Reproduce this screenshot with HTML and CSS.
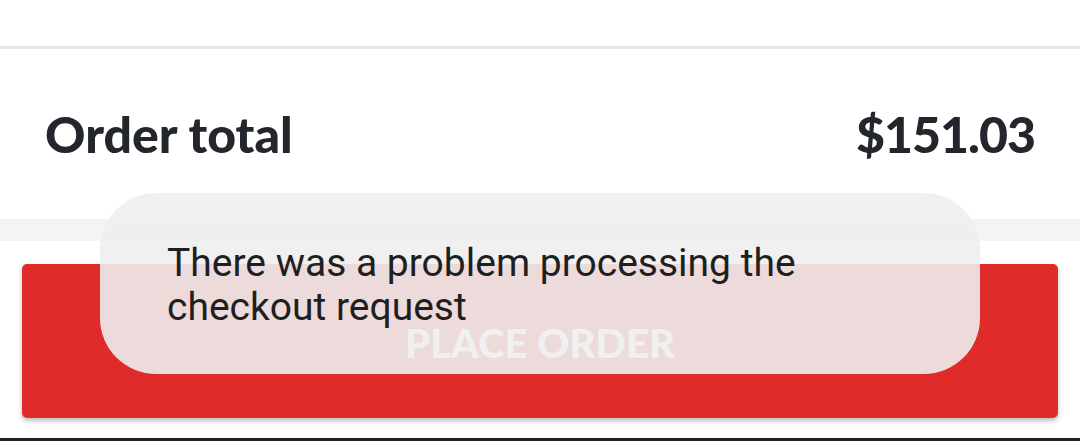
FILE: index.html
```html
<!DOCTYPE html>
<html lang="en">
<head>
    <meta charset="UTF-8">
    <meta name="viewport" content="width=device-width, initial-scale=1.0">
    <title>Checkout</title>
    <link rel="stylesheet" href="styles.css">
</head>
<body>
    <div class="top-bar"></div>

    <div class="total-row">
        <span class="total-label">Order total</span>
        <span class="total-value">$151.03</span>
    </div>

    <div class="spacer"></div>

    <div class="actions">
        <button class="place-order">PLACE ORDER</button>
    </div>

    <div class="bottom-line"></div>

    <div class="toast">
        <p>There was a problem processing the checkout request</p>
    </div>
</body>
</html>
```

FILE: styles.css
```css
* {
    margin: 0;
    padding: 0;
    box-sizing: border-box;
}

body {
    font-family: Lato, "Liberation Sans", sans-serif;
    background: #fff;
    width: 1080px;
    height: 441px;
    overflow: hidden;
    position: relative;
}

.top-bar {
    height: 49px;
    border-bottom: 3px solid #e6e6e6;
}

.total-row {
    height: 170px;
    display: flex;
    justify-content: space-between;
    align-items: center;
    padding: 0 45px;
    color: #23272d;
    font-weight: 900;
    font-size: 50px;
}

.total-value {
    letter-spacing: -1px;
}

.spacer {
    height: 22px;
    background: #f4f4f4;
}

.actions {
    padding: 23px 22px 20px;
}

.place-order {
    display: block;
    width: 100%;
    height: 154px;
    border: none;
    border-radius: 5px;
    background: #e02b2b;
    color: #fff;
    font-family: Lato, "Liberation Sans", sans-serif;
    font-weight: 900;
    font-size: 40px;
    padding-top: 4px;
    box-shadow: 0 3px 5px rgba(0, 0, 0, 0.25);
}

.bottom-line {
    height: 3px;
    background: #222;
}

.toast {
    position: absolute;
    top: 193px;
    left: 100px;
    width: 880px;
    height: 181px;
    border-radius: 56px;
    background: rgba(238, 238, 238, 0.9);
    display: flex;
    align-items: center;
    padding: 0 67px;
}

.toast p {
    font-family: Roboto, sans-serif;
    font-size: 39px;
    line-height: 44px;
    color: #1f1f1f;
    padding-top: 2px;
}
```
